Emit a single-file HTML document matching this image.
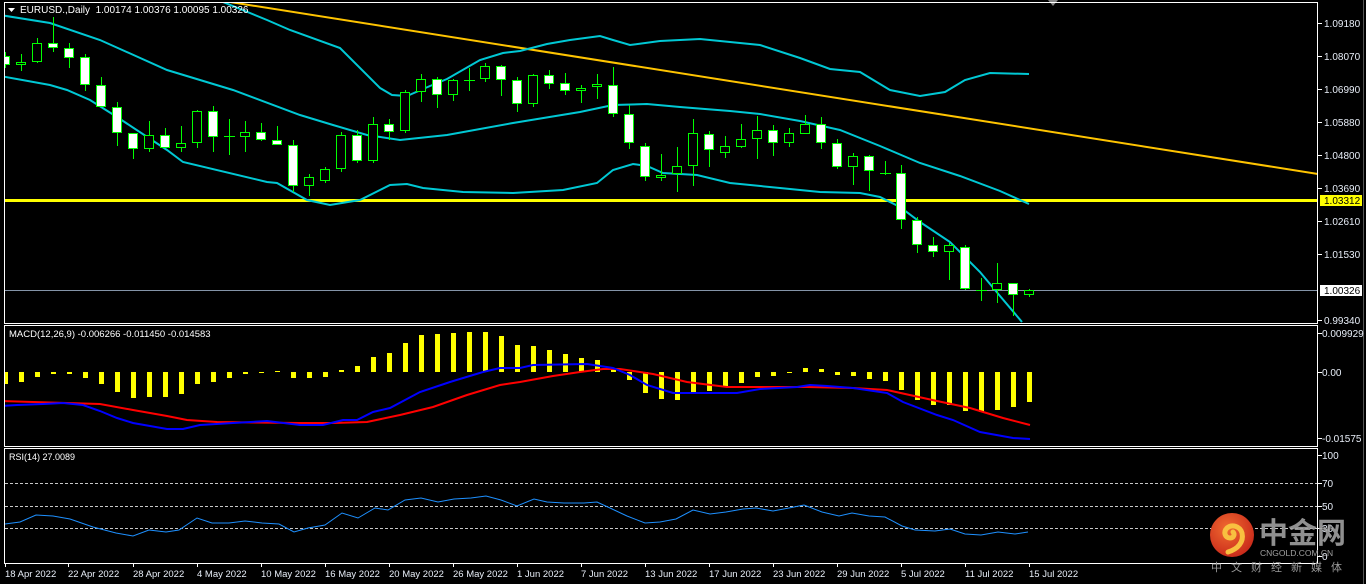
<!DOCTYPE html>
<html><head><meta charset="utf-8"><style>
html,body{margin:0;padding:0;background:#000;width:1366px;height:584px;overflow:hidden}
svg{display:block}
text{font-family:"Liberation Sans","Noto Sans CJK SC",sans-serif}
.ax{fill:#e8eef8;font-size:10px}
.w{fill:#fff;stroke:#00ff00;stroke-width:1}
.h{fill:#000;stroke:#00ff00;stroke-width:1}
</style></head><body>
<svg width="1366" height="584" viewBox="0 0 1366 584" xmlns="http://www.w3.org/2000/svg">
<rect width="1366" height="584" fill="#000"/>
<defs>
<clipPath id="cm"><rect x="5" y="3" width="1313" height="320"/></clipPath>
<clipPath id="cd"><rect x="5" y="326" width="1313" height="120"/></clipPath>
<radialGradient id="lg" cx="40%" cy="35%" r="70%"><stop offset="0" stop-color="#f06a30"/><stop offset="1" stop-color="#c8281a"/></radialGradient>
</defs>
<line x1="1363.5" y1="0" x2="1363.5" y2="584" stroke="#555" stroke-width="1"/>
<polygon points="1048,0 1058,0 1053,6" fill="#888"/>
<!-- MAIN PANE -->
<g clip-path="url(#cm)">
<polyline fill="none" stroke="#ffc400" stroke-width="2" points="230,2 1318,174"/>
<line x1="4" y1="200.5" x2="1318" y2="200.5" stroke="#ffff00" stroke-width="3"/>
<line x1="4" y1="290.5" x2="1318" y2="290.5" stroke="#8494a8" stroke-width="1"/>
<g fill="none" stroke="#00c8d4" stroke-width="2">
<polyline points="223,2 267,20 290,30 340,48 380,88 392,95 407,96 430,86 447,79 480,60 503,53 520,51 547,44 570,40 600,36 613,40 630,45 660,41 700,39 760,45 800,58 830,69 860,72 890,90 920,96 945,92 965,80 990,73 1029,74"/>
<polyline points="0,15 50,23 100,40 167,70 233,90 300,115 333,125 367,135 400,140 447,135 513,123 580,112 613,105 647,104 680,107 730,111 760,114 800,121 840,130 880,146 920,163 960,176 1000,191 1029,204"/>
<polyline points="0,76 50,85 67,90 90,100 117,117 167,150 183,162 267,182 277,183 307,200 330,205 360,200 380,190 390,185 407,184 423,188 463,192 513,193 563,190 597,183 613,170 633,164 647,166 663,173 697,175 730,183 780,188 820,192 860,193 880,197 900,207 920,222 950,242 980,272 1000,296 1022,322"/>
</g>
<path fill="none" stroke="#00ff00" stroke-width="1" d="M5.5 52V68M21.5 54V71M37.5 38V63M53.5 17V52M69.5 43V68M85.5 54V91M101.5 77V107M117.5 102V146M133.5 133V159M149.5 121V152M165.5 128V148M181.5 126V152M197.5 110V148M213.5 106V152M229.5 119V155M245.5 121V152M261.5 123V141M277.5 126V145M293.5 140V192M309.5 174V196M325.5 167V183M341.5 132V172M357.5 130V163M373.5 117V163M389.5 119V140M405.5 90V133M421.5 74V102M437.5 77V108M453.5 79V101M469.5 68V91M485.5 63V82M501.5 65V96M517.5 77V112M533.5 74V107M549.5 70V89M565.5 73V95M581.5 85V103M597.5 74V99M613.5 67V117M629.5 105V149M645.5 143V181M661.5 154V181M677.5 147V192M693.5 119V186M709.5 131V167M725.5 136V158M741.5 124V148M757.5 116V159M773.5 125V156M789.5 128V147M805.5 115V134M821.5 117V149M837.5 139V169M853.5 153V185M869.5 155V191M885.5 161V175M901.5 165V229M917.5 217V253M933.5 237V257M949.5 243V280M965.5 245V290M981.5 278V301M997.5 263V303M1013.5 283V316M1029.5 289V297M224 136.5H235M464 80.5H475M880 173.5H891M976 290.5H987"/>
<rect class="w" x="0.5" y="56.5" width="9" height="8"/>
<rect class="h" x="16.5" y="62.5" width="9" height="2"/>
<rect class="h" x="32.5" y="43.5" width="9" height="18"/>
<rect class="w" x="48.5" y="43.5" width="9" height="4"/>
<rect class="w" x="64.5" y="48.5" width="9" height="9"/>
<rect class="w" x="80.5" y="57.5" width="9" height="27"/>
<rect class="w" x="96.5" y="85.5" width="9" height="21"/>
<rect class="w" x="112.5" y="107.5" width="9" height="25"/>
<rect class="w" x="128.5" y="133.5" width="9" height="15"/>
<rect class="h" x="144.5" y="135.5" width="9" height="13"/>
<rect class="w" x="160.5" y="135.5" width="9" height="12"/>
<rect class="h" x="176.5" y="143.5" width="9" height="4"/>
<rect class="h" x="192.5" y="111.5" width="9" height="31"/>
<rect class="w" x="208.5" y="111.5" width="9" height="25"/>
<rect class="h" x="240.5" y="132.5" width="9" height="4"/>
<rect class="w" x="256.5" y="132.5" width="9" height="7"/>
<rect class="w" x="272.5" y="140.5" width="9" height="4"/>
<rect class="w" x="288.5" y="145.5" width="9" height="40"/>
<rect class="h" x="304.5" y="177.5" width="9" height="8"/>
<rect class="h" x="320.5" y="169.5" width="9" height="11"/>
<rect class="h" x="336.5" y="135.5" width="9" height="33"/>
<rect class="w" x="352.5" y="135.5" width="9" height="25"/>
<rect class="h" x="368.5" y="124.5" width="9" height="36"/>
<rect class="w" x="384.5" y="124.5" width="9" height="7"/>
<rect class="h" x="400.5" y="92.5" width="9" height="38"/>
<rect class="h" x="416.5" y="79.5" width="9" height="12"/>
<rect class="w" x="432.5" y="79.5" width="9" height="15"/>
<rect class="h" x="448.5" y="80.5" width="9" height="14"/>
<rect class="h" x="480.5" y="66.5" width="9" height="12"/>
<rect class="w" x="496.5" y="66.5" width="9" height="13"/>
<rect class="w" x="512.5" y="80.5" width="9" height="23"/>
<rect class="h" x="528.5" y="75.5" width="9" height="28"/>
<rect class="w" x="544.5" y="75.5" width="9" height="8"/>
<rect class="w" x="560.5" y="83.5" width="9" height="7"/>
<rect class="h" x="576.5" y="88.5" width="9" height="2"/>
<rect class="h" x="592.5" y="84.5" width="9" height="2"/>
<rect class="w" x="608.5" y="85.5" width="9" height="28"/>
<rect class="w" x="624.5" y="114.5" width="9" height="28"/>
<rect class="w" x="640.5" y="146.5" width="9" height="30"/>
<rect class="h" x="656.5" y="175.5" width="9" height="2"/>
<rect class="h" x="672.5" y="166.5" width="9" height="7"/>
<rect class="h" x="688.5" y="133.5" width="9" height="32"/>
<rect class="w" x="704.5" y="134.5" width="9" height="15"/>
<rect class="h" x="720.5" y="146.5" width="9" height="6"/>
<rect class="h" x="736.5" y="139.5" width="9" height="7"/>
<rect class="h" x="752.5" y="130.5" width="9" height="8"/>
<rect class="w" x="768.5" y="130.5" width="9" height="12"/>
<rect class="h" x="784.5" y="133.5" width="9" height="9"/>
<rect class="h" x="800.5" y="124.5" width="9" height="9"/>
<rect class="w" x="816.5" y="124.5" width="9" height="18"/>
<rect class="w" x="832.5" y="143.5" width="9" height="23"/>
<rect class="h" x="848.5" y="156.5" width="9" height="10"/>
<rect class="w" x="864.5" y="156.5" width="9" height="14"/>
<rect class="w" x="896.5" y="173.5" width="9" height="46"/>
<rect class="w" x="912.5" y="220.5" width="9" height="24"/>
<rect class="w" x="928.5" y="245.5" width="9" height="6"/>
<rect class="h" x="944.5" y="245.5" width="9" height="6"/>
<rect class="w" x="960.5" y="247.5" width="9" height="41"/>
<rect class="h" x="992.5" y="283.5" width="9" height="6"/>
<rect class="w" x="1008.5" y="283.5" width="9" height="11"/>
<rect class="h" x="1024.5" y="290.5" width="9" height="4"/>
</g>
<polygon points="8,8 15,8 11.5,12" fill="#fff"/>
<text x="20" y="13" fill="#fff" style="font-size:10px">EURUSD.,Daily&#160; 1.00174 1.00376 1.00095 1.00326</text>
<!-- MACD PANE -->
<g clip-path="url(#cd)">
<g fill="#ffff00">
<rect x="3" y="372" width="5" height="12"/><rect x="19" y="372" width="5" height="10"/><rect x="35" y="372" width="5" height="5"/><rect x="51" y="372" width="5" height="2"/><rect x="67" y="372" width="5" height="2"/><rect x="83" y="372" width="5" height="6"/><rect x="99" y="372" width="5" height="12"/><rect x="115" y="372" width="5" height="20"/><rect x="131" y="372" width="5" height="26"/><rect x="147" y="372" width="5" height="25"/><rect x="163" y="372" width="5" height="25"/><rect x="179" y="372" width="5" height="22"/><rect x="195" y="372" width="5" height="12"/><rect x="211" y="372" width="5" height="10"/><rect x="227" y="372" width="5" height="6"/><rect x="243" y="372" width="5" height="2"/><rect x="259" y="372" width="5" height="1"/><rect x="275" y="371" width="5" height="1"/><rect x="291" y="372" width="5" height="6"/><rect x="307" y="372" width="5" height="6"/><rect x="323" y="372" width="5" height="5"/><rect x="339" y="370" width="5" height="2"/><rect x="355" y="366" width="5" height="6"/><rect x="371" y="357" width="5" height="15"/><rect x="387" y="353" width="5" height="19"/><rect x="403" y="343" width="5" height="29"/><rect x="419" y="335" width="5" height="37"/><rect x="435" y="334" width="5" height="38"/><rect x="451" y="333" width="5" height="39"/><rect x="467" y="332" width="5" height="40"/><rect x="483" y="332" width="5" height="40"/><rect x="499" y="336" width="5" height="36"/><rect x="515" y="345" width="5" height="27"/><rect x="531" y="346" width="5" height="26"/><rect x="547" y="350" width="5" height="22"/><rect x="563" y="354" width="5" height="18"/><rect x="579" y="358" width="5" height="14"/><rect x="595" y="360" width="5" height="12"/><rect x="611" y="368" width="5" height="4"/><rect x="627" y="372" width="5" height="8"/><rect x="643" y="372" width="5" height="21"/><rect x="659" y="372" width="5" height="27"/><rect x="675" y="372" width="5" height="28"/><rect x="691" y="372" width="5" height="20"/><rect x="707" y="372" width="5" height="19"/><rect x="723" y="372" width="5" height="14"/><rect x="739" y="372" width="5" height="11"/><rect x="755" y="372" width="5" height="5"/><rect x="771" y="372" width="5" height="4"/><rect x="787" y="372" width="5" height="1"/><rect x="803" y="368" width="5" height="4"/><rect x="819" y="369" width="5" height="3"/><rect x="835" y="372" width="5" height="3"/><rect x="851" y="372" width="5" height="4"/><rect x="867" y="372" width="5" height="7"/><rect x="883" y="372" width="5" height="9"/><rect x="899" y="372" width="5" height="18"/><rect x="915" y="372" width="5" height="28"/><rect x="931" y="372" width="5" height="33"/><rect x="947" y="372" width="5" height="33"/><rect x="963" y="372" width="5" height="39"/><rect x="979" y="372" width="5" height="40"/><rect x="995" y="372" width="5" height="38"/><rect x="1011" y="372" width="5" height="35"/><rect x="1027" y="372" width="5" height="30"/>
</g>
<polyline fill="none" stroke="#ff0000" stroke-width="2" points="0,401 33,402 67,403 100,404 133,410 167,416 187,420 217,422 300,423 333,423 367,422 400,415 433,407 467,395 500,385 520,382 553,376 580,372 603,369 620,369 653,374 687,382 727,387 807,387 853,388 887,390 937,401 970,408 1003,418 1030,425"/>
<polyline fill="none" stroke="#0000ff" stroke-width="2" points="0,406 17,405 43,404 63,403 83,405 100,411 117,418 133,423 150,426 167,429 183,429 200,425 233,423 267,421 300,425 323,425 343,420 357,420 373,412 390,408 420,392 450,382 483,372 500,368 520,368 533,365 587,364 613,368 630,375 647,385 673,393 737,393 760,389 797,387 810,385 827,386 853,388 887,393 903,402 937,415 953,420 980,432 1013,438 1030,439"/>
</g>
<text x="9" y="337" fill="#fff" style="font-size:9.5px">MACD(12,26,9) -0.006266 -0.011450 -0.014583</text>
<!-- RSI PANE -->
<g stroke="#c8c8c8" stroke-width="1" stroke-dasharray="3,2">
<line x1="5" y1="483.5" x2="1318" y2="483.5"/><line x1="5" y1="506.5" x2="1318" y2="506.5"/><line x1="5" y1="528.5" x2="1318" y2="528.5"/>
</g>
<polyline fill="none" stroke="#1e90ff" stroke-width="1" points="5,524 20,522 36,515 53,516 70,519 93,527 116,533 133,536 149,530 166,532 179,530 197,518 212,523 229,523 245,521 262,523 279,524 294,532 308,528 325,525 342,513 358,518 375,508 388,510 405,500 421,498 438,502 454,499 471,498 486,496 501,500 517,506 534,499 547,502 564,503 584,503 597,502 610,508 627,516 645,523 660,522 676,519 693,510 710,514 726,512 743,509 756,508 773,511 789,508 804,505 822,512 839,516 852,513 869,516 885,517 902,526 915,530 935,531 950,529 965,534 981,535 998,532 1015,534 1028,532"/>
<text x="9" y="460" fill="#fff" style="font-size:9px">RSI(14) 27.0089</text>
<!-- BORDERS -->
<g fill="none" stroke="#fff" stroke-width="1">
<rect x="4.5" y="2.5" width="1313" height="321"/>
<rect x="4.5" y="325.5" width="1313" height="121"/>
<rect x="4.5" y="448.5" width="1313" height="115"/>
</g>
<!-- RIGHT AXIS -->
<g stroke="#fff" stroke-width="1">
<path d="M1318 23.5h4M1318 56.5h4M1318 89.5h4M1318 122.5h4M1318 155.5h4M1318 188.5h4M1318 221.5h4M1318 254.5h4M1318 320.5h4M1318 333.5h4M1318 372.5h4M1318 438.5h4M1318 455.5h4M1318 483.5h4M1318 506.5h4M1318 528.5h4M1318 556.5h4"/>
</g>
<g class="ax">
<text x="1324" y="27">1.09180</text><text x="1324" y="60">1.08070</text><text x="1324" y="93">1.06990</text><text x="1324" y="126">1.05880</text><text x="1324" y="159">1.04800</text><text x="1324" y="192">1.03690</text><text x="1324" y="225">1.02610</text><text x="1324" y="258">1.01530</text><text x="1324" y="324">0.99340</text>
<text x="1322" y="337">0.009929</text><text x="1322" y="376">0.00</text><text x="1322" y="442">-0.01575</text>
<text x="1322" y="459">100</text><text x="1322" y="487">70</text><text x="1322" y="510">50</text><text x="1322" y="532">30</text><text x="1322" y="560">0</text>
</g>
<rect x="1320" y="195" width="42" height="11" fill="#ffff00"/>
<text x="1324" y="204" fill="#000" style="font-size:10px">1.03312</text>
<rect x="1320" y="285" width="42" height="11" fill="#fff"/>
<text x="1324" y="294" fill="#000" style="font-size:10px">1.00326</text>
<!-- DATE AXIS -->
<path stroke="#fff" stroke-width="1" d="M5.5 563v4M68.5 563v4M133.5 563v4M197.5 563v4M261.5 563v4M325.5 563v4M389.5 563v4M453.5 563v4M517.5 563v4M581.5 563v4M645.5 563v4M709.5 563v4M773.5 563v4M837.5 563v4M901.5 563v4M965.5 563v4M1029.5 563v4"/>
<g class="ax" style="font-size:9.5px">
<text x="5" y="577">18 Apr 2022</text><text x="68" y="577">22 Apr 2022</text><text x="133" y="577">28 Apr 2022</text><text x="197" y="577">4 May 2022</text><text x="261" y="577">10 May 2022</text><text x="325" y="577">16 May 2022</text><text x="389" y="577">20 May 2022</text><text x="453" y="577">26 May 2022</text><text x="517" y="577">1 Jun 2022</text><text x="581" y="577">7 Jun 2022</text><text x="645" y="577">13 Jun 2022</text><text x="709" y="577">17 Jun 2022</text><text x="773" y="577">23 Jun 2022</text><text x="837" y="577">29 Jun 2022</text><text x="901" y="577">5 Jul 2022</text><text x="965" y="577">11 Jul 2022</text><text x="1029" y="577">15 Jul 2022</text>
</g>
<!-- WATERMARK -->
<circle cx="1232" cy="535" r="22" fill="url(#lg)"/>
<path d="M1228 552c10-3 16-10 14-19-2-7-10-9-15-5-4 4-2 10 3 10 4 0 5-4 3-6" fill="none" stroke="#f8c040" stroke-width="5" stroke-linecap="round"/>
<text x="1259" y="543" fill="#a0a0a0" fill-opacity="0.9" style="font-size:29px;font-weight:bold;font-family:'Noto Sans CJK SC','WenQuanYi Zen Hei',sans-serif">中金网</text>
<text x="1260" y="556" fill="#a0a0a0" style="font-size:8.5px">CNGOLD.COM.CN</text>
<text x="1211" y="571" fill="#9a9a9a" style="font-size:11px;letter-spacing:9px;font-family:'Noto Sans CJK SC',sans-serif">中文财经新媒体</text>
</svg>
</body></html>
